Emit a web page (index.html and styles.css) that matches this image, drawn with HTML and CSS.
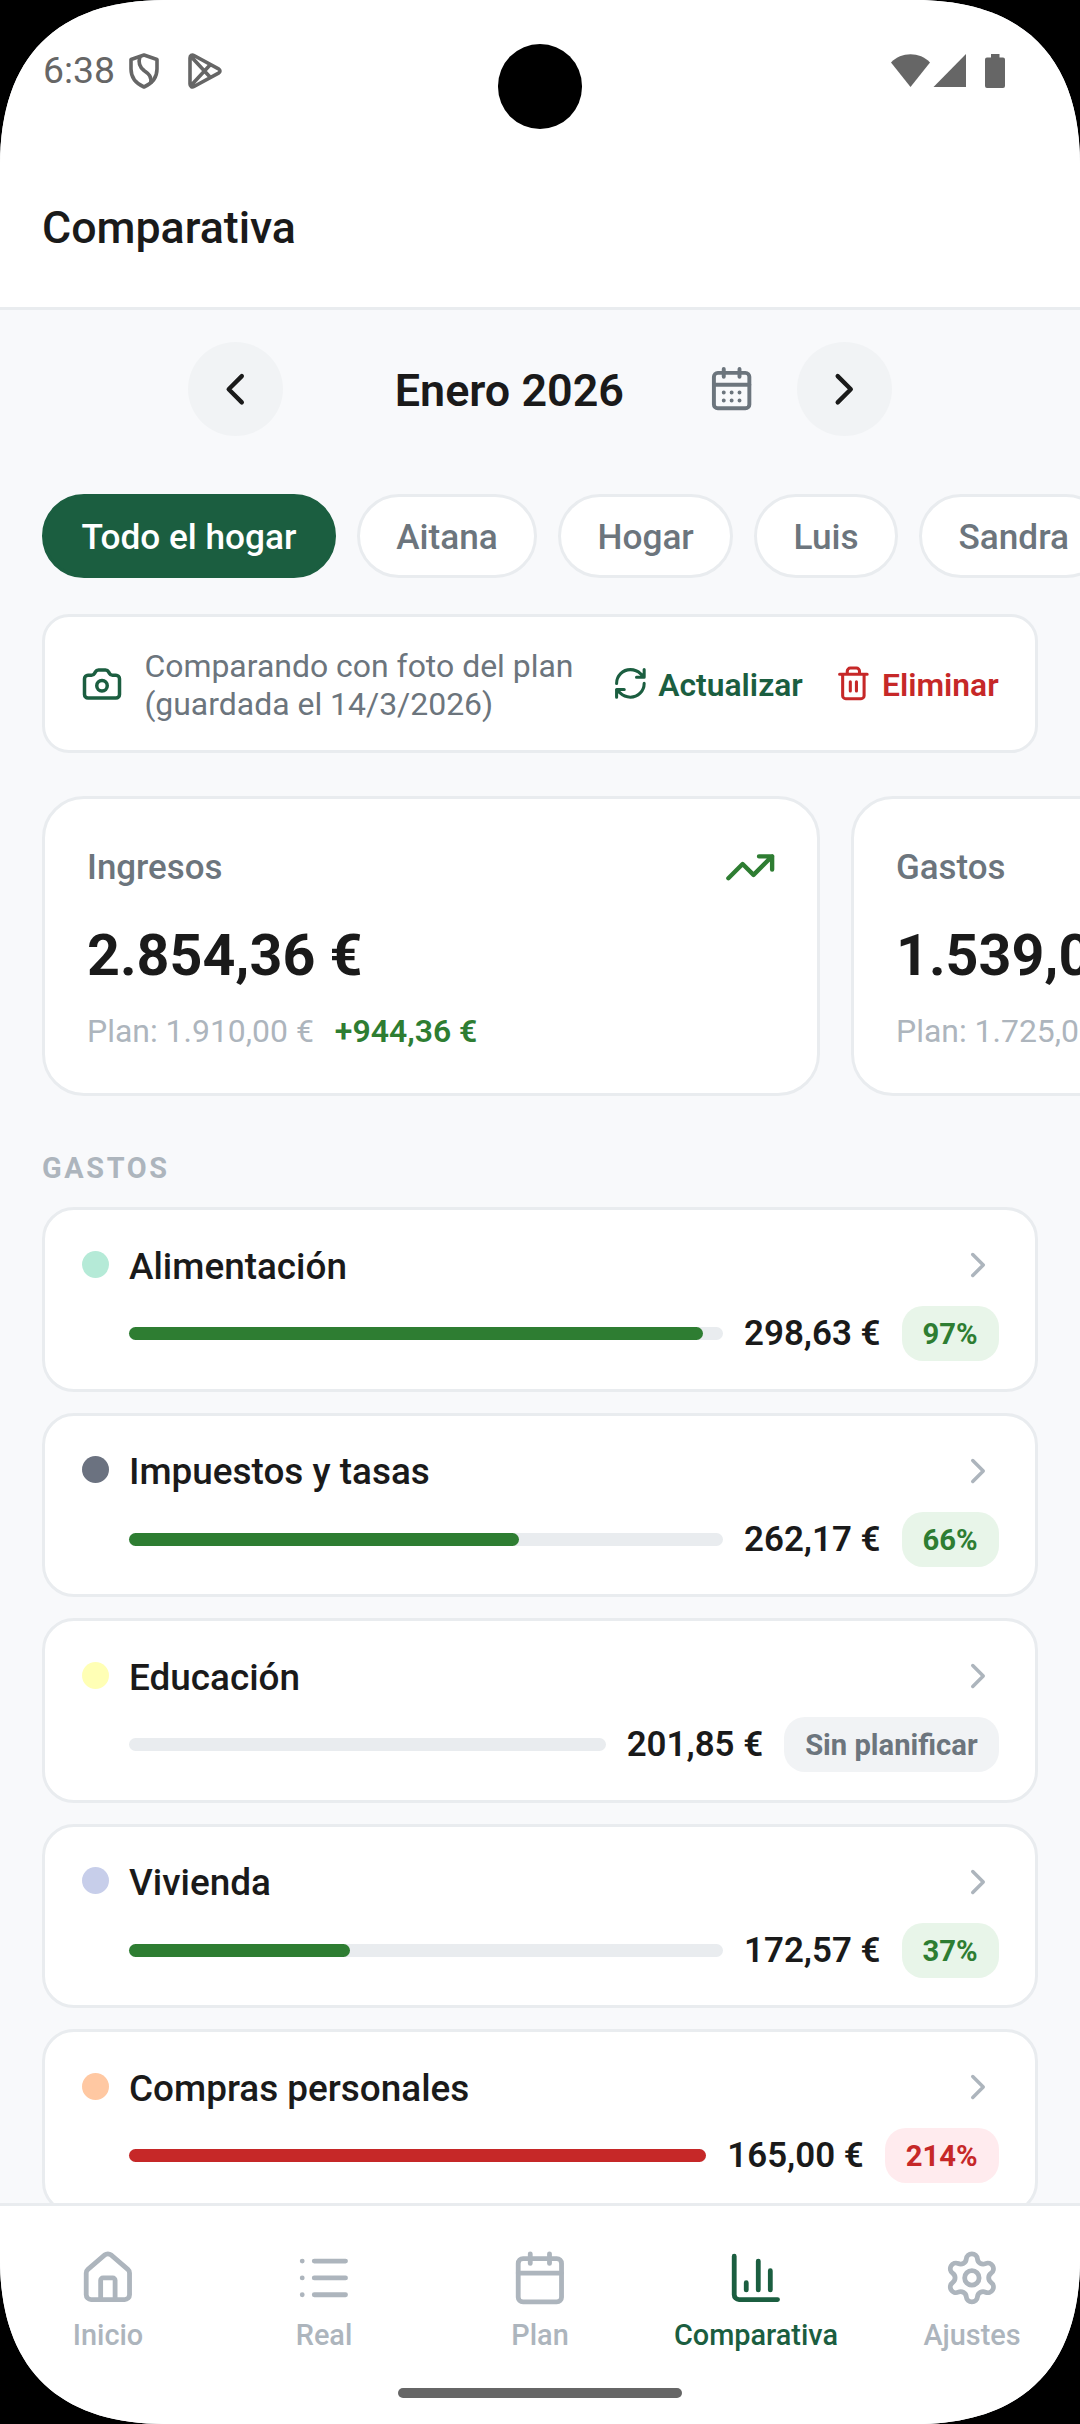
FILE: index.html
```html
<!DOCTYPE html>
<html lang="es">
<head>
	<meta charset="UTF-8">
	<title>Comparativa</title>
	<link rel="stylesheet" href="styles.css">
</head>
<body>
	<!-- iconos -->
	<svg class="sprite">
		<symbol id="i-left" viewBox="0 0 24 24"><path d="m15 18-6-6 6-6"/></symbol>
		<symbol id="i-right" viewBox="0 0 24 24"><path d="m9 18 6-6-6-6"/></symbol>
		<symbol id="i-calendar" viewBox="0 0 24 24"><path d="M8 2v4M16 2v4M3 10h18"/><rect x="3" y="4" width="18" height="18" rx="2"/></symbol>
		<symbol id="i-days" viewBox="0 0 24 24"><path d="M8 2v4M16 2v4M3 10h18M8 14h.01M12 14h.01M16 14h.01M8 18h.01M12 18h.01M16 18h.01"/><rect x="3" y="4" width="18" height="18" rx="2"/></symbol>
		<symbol id="i-camera" viewBox="0 0 24 24"><path d="M13.997 4a2 2 0 0 1 1.76 1.05l.486.9A2 2 0 0 0 18.003 7H20a2 2 0 0 1 2 2v9a2 2 0 0 1-2 2H4a2 2 0 0 1-2-2V9a2 2 0 0 1 2-2h1.997a2 2 0 0 0 1.759-1.048l.489-.904A2 2 0 0 1 10.004 4z"/><circle cx="12" cy="13" r="3"/></symbol>
		<symbol id="i-refresh" viewBox="0 0 24 24"><path d="M3 12a9 9 0 0 1 9-9 9.75 9.75 0 0 1 6.74 2.74L21 8M21 3v5h-5M21 12a9 9 0 0 1-9 9 9.75 9.75 0 0 1-6.74-2.74L3 16M8 16H3v5"/></symbol>
		<symbol id="i-trash" viewBox="0 0 24 24"><path d="M10 11v6M14 11v6M19 6v14a2 2 0 0 1-2 2H7a2 2 0 0 1-2-2V6M3 6h18M8 6V4a2 2 0 0 1 2-2h4a2 2 0 0 1 2 2v2"/></symbol>
		<symbol id="i-trend" viewBox="0 0 24 24"><path d="M16 7h6v6M22 7l-8.5 8.5-5-5L2 17"/></symbol>
		<symbol id="i-home" viewBox="0 0 24 24"><path d="M15 21v-8a1 1 0 0 0-1-1h-4a1 1 0 0 0-1 1v8"/><path d="M3 10a2 2 0 0 1 .709-1.528l7-6a2 2 0 0 1 2.582 0l7 6A2 2 0 0 1 21 10v9a2 2 0 0 1-2 2H5a2 2 0 0 1-2-2z"/></symbol>
		<symbol id="i-list" viewBox="0 0 24 24"><path d="M3 5h.01M3 12h.01M3 19h.01M8 5h13M8 12h13M8 19h13"/></symbol>
		<symbol id="i-chart" viewBox="0 0 24 24"><path d="M3 3v16a2 2 0 0 0 2 2h16M18 17V9M13 17V5M8 17v-3"/></symbol>
		<symbol id="i-settings" viewBox="0 0 24 24"><path d="M9.671 4.136a2.34 2.34 0 0 1 4.659 0 2.34 2.34 0 0 0 3.319 1.915 2.34 2.34 0 0 1 2.33 4.033 2.34 2.34 0 0 0 0 3.831 2.34 2.34 0 0 1-2.33 4.033 2.34 2.34 0 0 0-3.319 1.915 2.34 2.34 0 0 1-4.659 0 2.34 2.34 0 0 0-3.32-1.915 2.34 2.34 0 0 1-2.33-4.033 2.34 2.34 0 0 0 0-3.831A2.34 2.34 0 0 1 6.35 6.051a2.34 2.34 0 0 0 3.319-1.915"/><circle cx="12" cy="12" r="3"/></symbol>
	</svg>

	<div class="phone">
		<div class="status">
			<span class="clock">6:38</span>
			<svg class="st-shield" viewBox="0 0 30 36"><path d="M15 2 28 6.500V16c0 8-5 14.500-13 18C7 30.500 2 24 2 16V6.500z"/><path d="M11 3.500c-2 6-1 10 4 14 5 3.500 8 6 6.500 13"/></svg>
			<svg class="st-play" viewBox="0 0 34 36"><path d="M2 5v26c0 2.500 2 3.600 4 2.500l24.500-13.300c2-1.200 2-3.200 0-4.400L6 2.500C4 1.400 2 2.500 2 5zM3 3.500l19 20.500M3 32.500 22 12"/></svg>
			<svg class="st-right" viewBox="0 0 114 34"><path d="M0 8.500C10-2.500 29-2.500 39 8.500L19.500 33z"/><path d="M75 0v33H42.500z"/><path d="M100 0h8.500v3.500h3.500a2 2 0 0 1 2 2V32a2 2 0 0 1-2 2H96a2 2 0 0 1-2-2V5.500a2 2 0 0 1 2-2h4z"/></svg>
			<div class="lens"></div>
		</div>
		<header class="topbar">Comparativa</header>

		<main class="content">
			<div class="month">
				<button class="round"><svg class="icon"><use href="#i-left"/></svg></button>
				<span class="month-name">Enero 2026</span>
				<svg class="icon month-cal"><use href="#i-days"/></svg>
				<button class="round"><svg class="icon"><use href="#i-right"/></svg></button>
			</div>

			<div class="chips">
				<span class="chip active">Todo el hogar</span>
				<span class="chip">Aitana</span>
				<span class="chip">Hogar</span>
				<span class="chip">Luis</span>
				<span class="chip">Sandra</span>
			</div>

			<div class="photo">
				<svg class="icon photo-cam"><use href="#i-camera"/></svg>
				<p class="photo-text">Comparando con foto del plan<br>(guardada el 14/3/2026)</p>
				<span class="action"><svg class="icon"><use href="#i-refresh"/></svg>Actualizar</span>
				<span class="action danger"><svg class="icon"><use href="#i-trash"/></svg>Eliminar</span>
			</div>

			<div class="summary">
				<section class="card">
					<div class="card-head">Ingresos<svg class="icon"><use href="#i-trend"/></svg></div>
					<div class="total">2.854,36 €</div>
					<div class="plan">Plan: 1.910,00 €<b>+944,36 €</b></div>
				</section>
				<section class="card">
					<div class="card-head">Gastos</div>
					<div class="total">1.539,02 €</div>
					<div class="plan">Plan: 1.725,00 €</div>
				</section>
			</div>

			<h2 class="group">GASTOS</h2>
			<div class="rows">
				<article class="row">
					<div class="row-head"><i class="dot mint"></i><span>Alimentación</span><svg class="icon"><use href="#i-right"/></svg></div>
					<div class="row-data"><div class="bar"><div class="fill" style="width: 96.6%"></div></div><span class="amount">298,63 €</span><span class="pill">97%</span></div>
				</article>
				<article class="row">
					<div class="row-head"><i class="dot slate"></i><span>Impuestos y tasas</span><svg class="icon"><use href="#i-right"/></svg></div>
					<div class="row-data"><div class="bar"><div class="fill" style="width: 65.7%"></div></div><span class="amount">262,17 €</span><span class="pill">66%</span></div>
				</article>
				<article class="row">
					<div class="row-head"><i class="dot yellow"></i><span>Educación</span><svg class="icon"><use href="#i-right"/></svg></div>
					<div class="row-data"><div class="bar"></div><span class="amount">201,85 €</span><span class="pill none">Sin planificar</span></div>
				</article>
				<article class="row">
					<div class="row-head"><i class="dot lilac"></i><span>Vivienda</span><svg class="icon"><use href="#i-right"/></svg></div>
					<div class="row-data"><div class="bar"><div class="fill" style="width: 37.2%"></div></div><span class="amount">172,57 €</span><span class="pill">37%</span></div>
				</article>
				<article class="row">
					<div class="row-head"><i class="dot peach"></i><span>Compras personales</span><svg class="icon"><use href="#i-right"/></svg></div>
					<div class="row-data"><div class="bar"><div class="fill over" style="width: 100%"></div></div><span class="amount">165,00 €</span><span class="pill over">214%</span></div>
				</article>
			</div>
		</main>

		<nav class="tabs">
			<a class="tab"><svg class="icon"><use href="#i-home"/></svg>Inicio</a>
			<a class="tab"><svg class="icon"><use href="#i-list"/></svg>Real</a>
			<a class="tab"><svg class="icon"><use href="#i-calendar"/></svg>Plan</a>
			<a class="tab current"><svg class="icon"><use href="#i-chart"/></svg>Comparativa</a>
			<a class="tab"><svg class="icon"><use href="#i-settings"/></svg>Ajustes</a>
			<div class="gesture"></div>
		</nav>
	</div>
</body>
</html>
```
FILE: styles.css
```css
* {
	box-sizing: border-box;
}

body {
	margin: 0;
	background: #000;
	font-family: Roboto, sans-serif;
	color: #1a1a1a;
}

.sprite {
	display: none;
}

.icon {
	width: 42px;
	height: 42px;
	flex: none;
	fill: none;
	stroke: currentColor;
	stroke-width: 2;
	stroke-linecap: round;
	stroke-linejoin: round;
}

.phone {
	width: 1080px;
	height: 2424px;
	display: flex;
	flex-direction: column;
	overflow: hidden;
	background: #f8f9fb;
	clip-path: path("M0 165C0 57 57 0 165 0H915C1023 0 1080 57 1080 165V2259C1080 2367 1023 2424 915 2424H165C57 2424 0 2367 0 2259Z");
}

/* status bar */
.status {
	position: relative;
	display: flex;
	flex: none;
	height: 142px;
	padding: 0 75px 0 43px;
	align-items: flex-start;
	background: #fff;
	color: #666;
}

.clock {
	width: 86px;
	margin-top: 49px;
	font-size: 37.3px;
	line-height: 43px;
}

.st-shield,
.st-play {
	height: 36px;
	margin-top: 53px;
	fill: none;
	stroke: #666;
	stroke-width: 3.6;
	stroke-linejoin: round;
}

.st-shield {
	width: 30px;
	margin-right: 29px;
}

.st-play {
	width: 34px;
}

.st-right {
	width: 114px;
	height: 34px;
	margin: 54px 0 0 auto;
	fill: #666;
}

.lens {
	position: absolute;
	top: 44px;
	left: 497.5px;
	width: 84.5px;
	height: 84.5px;
	border-radius: 50%;
	background: #000;
}

.topbar {
	flex: none;
	height: 168px;
	padding: 0 42px;
	border-bottom: 3px solid #e9ecef;
	background: #fff;
	font-size: 44.7px;
	font-weight: 500;
	line-height: 172px;
}

.content {
	flex: 1;
	min-height: 0;
	overflow: hidden;
}

/* month picker */
.month {
	display: flex;
	width: 704px;
	margin: 32px auto 0;
	align-items: center;
}

.round {
	display: flex;
	width: 95px;
	height: 94px;
	padding: 0;
	border: none;
	border-radius: 50%;
	background: #f1f3f5;
	color: #1a1a1a;
	align-items: center;
	justify-content: center;
}

.round .icon {
	width: 52.5px;
	height: 52.5px;
}

.month-name {
	flex: 1;
	padding: 3px 0 0 28px;
	text-align: center;
	font-size: 44.9px;
	font-weight: 600;
}

.month-cal {
	width: 47.25px;
	height: 47.25px;
	margin-right: 42px;
	color: #6c757d;
}

/* household filter */
.chips {
	display: flex;
	gap: 21px;
	margin-top: 58px;
	padding-left: 42px;
}

.chip {
	flex: none;
	height: 84px;
	padding: 0 36.4px;
	border: 3px solid #e9ecef;
	border-radius: 42px;
	background: #fff;
	color: #6c757d;
	font-size: 35.2px;
	font-weight: 500;
	line-height: 80px;
}

.chip.active {
	border-color: #1b5e40;
	background: #1b5e40;
	color: #fff;
}

/* plan snapshot */
.photo {
	display: flex;
	height: 139px;
	margin: 36px 42px 0;
	padding: 0 36.4px;
	align-items: center;
	border: 3px solid #e9ecef;
	border-radius: 27px;
	background: #fff;
}

.photo-cam {
	color: #1b5e40;
}

.photo-text {
	flex: 1;
	margin: 2px 0 0 21px;
	white-space: nowrap;
	color: #6c757d;
	font-size: 31.95px;
	line-height: 38px;
}

.action {
	display: flex;
	gap: 10px;
	margin-top: 2px;
	align-items: center;
	color: #1b5e40;
	font-size: 31.8px;
	font-weight: 600;
}

.action .icon {
	width: 36.75px;
	height: 36.75px;
	margin-top: -2px;
}

.action.danger {
	margin-left: 32.5px;
	color: #c62828;
}

/* totals */
.summary {
	display: flex;
	gap: 31px;
	margin-top: 43px;
	padding-left: 42px;
}

.card {
	flex: none;
	width: 778px;
	height: 300px;
	padding: 42px 41px 42px 42px;
	border: 3px solid #e9ecef;
	border-radius: 42px;
	background: #fff;
}

.card-head {
	display: flex;
	height: 52.5px;
	align-items: center;
	justify-content: space-between;
	color: #6c757d;
	font-size: 34.9px;
	font-weight: 500;
}

.card-head .icon {
	width: 52.5px;
	height: 52.5px;
	color: #2e7d32;
}

.total {
	margin-top: 28px;
	font-size: 57.4px;
	font-weight: 700;
	line-height: 68px;
}

.plan {
	display: flex;
	gap: 21px;
	margin-top: 22px;
	color: #adb5bd;
	font-size: 31.95px;
	line-height: 38px;
}

.plan b {
	color: #2e7d32;
	font-weight: 600;
}

.group {
	margin: 54px 0 0 42px;
	color: #adb5bd;
	font-size: 28.875px;
	font-weight: 700;
	letter-spacing: 2.6px;
	line-height: 37px;
}

/* expense rows */
.rows {
	display: flex;
	flex-direction: column;
	gap: 21px;
	margin: 20px 42px 0;
}

.row {
	flex: none;
	height: 184.6px;
	padding: 34px 36.4px 0 37px;
	border: 3px solid #e9ecef;
	border-radius: 32px;
	background: #fff;
}

.row-head {
	display: flex;
	height: 42px;
	align-items: center;
	font-size: 36.9px;
	font-weight: 500;
}

.row-head span {
	padding-top: 2px;
}

.row-head .icon {
	margin-left: auto;
	color: #adb5bd;
}

.dot {
	width: 27px;
	height: 27px;
	margin: -2px 20px 0 0;
	border-radius: 50%;
}

.dot.mint { background: #b5ead7; }
.dot.slate { background: #6b7280; }
.dot.yellow { background: #ffffb5; }
.dot.lilac { background: #c7ceea; }
.dot.peach { background: #ffc8a2; }

.row-data {
	display: flex;
	gap: 21px;
	height: 55px;
	margin-top: 20px;
	padding-left: 47px;
	align-items: center;
}

.bar {
	flex: 1;
	height: 13px;
	border-radius: 6.5px;
	background: #e9ecef;
}

.fill {
	height: 100%;
	border-radius: 6.5px;
	background: #2e7d32;
}

.fill.over {
	background: #c62828;
}

.amount {
	font-size: 34.9px;
	font-weight: 600;
}

.pill {
	height: 55px;
	padding: 0 21px;
	border-radius: 21px;
	background: #e8f5e9;
	color: #2e7d32;
	font-size: 29.2px;
	font-weight: 700;
	line-height: 56px;
}

.pill.over {
	background: #ffebee;
	color: #c62828;
}

.pill.none {
	background: #f1f3f5;
	color: #6c757d;
}

/* bottom tabs */
.tabs {
	position: relative;
	display: flex;
	flex: none;
	height: 221px;
	border-top: 3px solid #e9ecef;
	background: #fff;
}

.tab {
	display: flex;
	width: 216px;
	padding-top: 43px;
	flex-direction: column;
	align-items: center;
	color: #adb5bd;
	font-size: 28.875px;
	font-weight: 500;
	line-height: 34px;
}

.tab .icon {
	width: 57.75px;
	height: 57.75px;
	margin-bottom: 11.5px;
}

.tab.current {
	color: #1b5e40;
}

.gesture {
	position: absolute;
	left: 398px;
	bottom: 26px;
	width: 284px;
	height: 10px;
	border-radius: 5px;
	background: #666;
}
```
